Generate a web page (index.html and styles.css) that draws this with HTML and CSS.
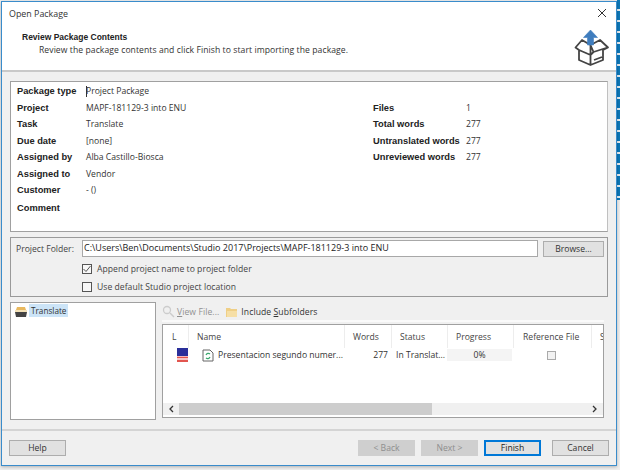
FILE: index.html
```html
<!DOCTYPE html>
<html lang="en">
<head>
<meta charset="utf-8">
<title>Open Package</title>
<link rel="stylesheet" href="styles.css">
</head>
<body>
<div class="desktop">
  <div class="window">
    <header class="head">
      <div class="title-row">
        <span class="title">Open Package</span>
        <svg class="close" width="10" height="10" viewBox="0 0 10 10"><path d="M1 1l8 8M9 1l-8 8" stroke="#333" stroke-width="1" fill="none"/></svg>
      </div>
      <div class="head-main">
        <div class="head-text">
          <h1 class="head-title">Review Package Contents</h1>
          <p class="head-sub">Review the package contents and click Finish to start importing the package.</p>
        </div>
        <svg class="box-icon" width="36" height="38" viewBox="0 0 36 38">
          <path d="M8 11L1.500 18.500 5 21v10l11.500 5 12.500-5V21l5-2.500L26 11l-9.500 5zM16.500 16v20M5 21l11.500 5 3-3M16.500 16l3 7 14-4.500M20 31l8-3" fill="none" stroke="#444" stroke-width="1.800" stroke-linejoin="round"/>
          <path d="M16.500 1L23.500 8.500h-4v7.500h-6V8.500h-4z" fill="#3f7dbe" stroke="#3f7dbe" stroke-width=".6" stroke-linejoin="round"/>
        </svg>
      </div>
    </header>
    <main class="content">
      <section class="info">
        <div class="info-col info-left">
          <div class="row"><b>Package type</b><span><i class="caret"></i>Project Package</span></div>
          <div class="row"><b>Project</b><span>MAPF-181129-3 into ENU</span></div>
          <div class="row"><b>Task</b><span>Translate</span></div>
          <div class="row"><b>Due date</b><span>[none]</span></div>
          <div class="row"><b>Assigned by</b><span>Alba Castillo-Biosca</span></div>
          <div class="row"><b>Assigned to</b><span>Vendor</span></div>
          <div class="row"><b>Customer</b><span>- ()</span></div>
          <div class="row row-comment"><b>Comment</b><span></span></div>
        </div>
        <div class="info-col info-right">
          <div class="row"><b>Files</b><span>1</span></div>
          <div class="row"><b>Total words</b><span>277</span></div>
          <div class="row"><b>Untranslated words</b><span>277</span></div>
          <div class="row"><b>Unreviewed words</b><span>277</span></div>
        </div>
      </section>
      <section class="folder">
        <div class="folder-line">
          <span class="folder-label">Project Folder:</span>
          <div class="input">C:\Users\Ben\Documents\Studio 2017\Projects\MAPF-181129-3 into ENU</div>
          <div class="btn browse">Browse...</div>
        </div>
        <label class="check"><span class="box"><svg width="10" height="10" viewBox="0 0 10 10"><path d="M1.500 5l2.500 2.500L8.500 2" fill="none" stroke="#555" stroke-width="1"/></svg></span>Append project name to project folder</label>
        <label class="check"><span class="box"></span>Use default Studio project location</label>
      </section>
      <section class="split">
        <div class="tree">
          <svg width="12" height="10" viewBox="0 0 12 10"><path d="M2 0h8l1 3H1z" fill="#e9b95f"/><rect x="0" y="3" width="12" height="2" fill="#f4e2b8"/><path d="M0 5h12l-1 5H1z" fill="#444"/></svg>
          <span class="tree-label">Translate</span>
        </div>
        <div class="files">
          <div class="toolbar">
            <span class="tool disabled"><svg width="13" height="13" viewBox="0 0 13 13"><circle cx="5" cy="5" r="3.500" fill="none" stroke="#ccc" stroke-width="1.300"/><path d="M8 8l4 4" stroke="#ccc" stroke-width="1.500"/></svg><span><u>V</u>iew File...</span></span>
            <span class="tool tool-folder"><svg width="12" height="12" viewBox="0 0 12 12"><path d="M0 2h4l1 1h6v8H0z" fill="#efcf86"/><path d="M1 5h10v6H1z" fill="#f6dfa6"/></svg><span>Include <u>S</u>ubfolders</span></span>
          </div>
          <div class="list">
            <div class="list-head">
              <span class="c c-l">L</span>
              <span class="c c-name">Name</span>
              <span class="c c-words">Words</span>
              <span class="c c-status">Status</span>
              <span class="c c-progress">Progress</span>
              <span class="c c-ref">Reference File</span>
              <span class="c c-s">S</span>
            </div>
            <div class="list-row">
              <span class="flag"></span>
              <svg class="doc" width="12" height="13" viewBox="0 0 12 13"><path d="M1 1h7l3 3v8H1z" fill="#fff" stroke="#666"/><path d="M4 6a2.500 2.500 0 0 1 4-1" fill="none" stroke="#3aa76d" stroke-width="1.200"/><path d="M8 8a2.500 2.500 0 0 1-4 1" fill="none" stroke="#3aa76d" stroke-width="1.200"/></svg>
              <span class="r-name">Presentacion segundo numer...</span>
              <span class="r-words">277</span>
              <span class="r-status">In Translat...</span>
              <span class="r-progress">0%</span>
              <span class="r-ref"><span class="mini"></span></span>
            </div>
            <div class="spacer"></div>
            <div class="scroll">
              <svg class="arrow" width="6" height="8" viewBox="0 0 6 8"><path d="M5 1L2 4l3 3" fill="none" stroke="#333" stroke-width="1.300"/></svg>
              <div class="thumb"></div>
              <svg class="arrow" width="6" height="8" viewBox="0 0 6 8"><path d="M1 1l3 3-3 3" fill="none" stroke="#333" stroke-width="1.300"/></svg>
            </div>
          </div>
        </div>
      </section>
    </main>
    <footer class="foot">
      <div class="btn">Help</div>
      <div class="foot-right">
        <div class="btn off">&lt; Back</div>
        <div class="btn off">Next &gt;</div>
        <div class="btn primary">Finish</div>
        <div class="btn cancel">Cancel</div>
      </div>
    </footer>
  </div>
</div>
</body>
</html>
```

FILE: styles.css
```css
* { box-sizing: border-box; }
html, body { margin: 0; height: 100%; }
body { width: 620px; height: 470px; overflow: hidden; font-family: "Open Sans", "Noto Sans", sans-serif; font-size: 8.600px; color: #333; }
.desktop {
  width: 620px; height: 470px; padding: 1px 3px 4px 1px;
  background:
    repeating-linear-gradient(to bottom, #0d78b8 0 9px, #e8eef2 9px 11px) right top / 3px 200px no-repeat,
    #eeeeee;
}
.window { width: 616px; height: 465px; border: 1px solid #3a8ccb; background: #f0f0f0; display: flex; flex-direction: column; box-shadow: 0 1px 3px rgba(0,0,0,.25); }
.head { height: 70px; background: #fff; border-bottom: 2px solid #c9c9c9; padding: 0 4px 0 7px; flex: none; }
.title-row { display: flex; justify-content: space-between; align-items: center; height: 20px; padding-top: 2px; }
.title { font-size: 8.900px; color: #333; }
.close { margin-right: 5px; }
.head-main { display: flex; justify-content: space-between; }
.head-text { padding: 10px 0 0 13px; }
.head-title { margin: 0; font: bold 8.500px "Liberation Sans", sans-serif; color: #222; }
.head-sub { margin: 2px 0 0 17px; font-size: 8.600px; letter-spacing: .07px; }
.box-icon { margin-top: 7px; margin-right: 2px; }
.content { flex: 1; padding: 9px 8px 0 8px; display: flex; flex-direction: column; min-height: 0; }
.info { height: 151px; background: #fff; border: 1px solid #a0a0a0; border-right-color: #c0c0c0; padding: 1px 6px; display: flex; flex: none; }
.info-col { display: flex; flex-direction: column; }
.info-left { width: 356px; }
.row { display: flex; height: 16.500px; align-items: center; }
.row b { font: bold 9.300px "Liberation Sans", sans-serif; color: #222; flex: none; white-space: nowrap; }
.info-left .row b { width: 69px; }
.info-right { padding-top: 16.500px; }
.info-right .row b { width: 93px; }
.row-comment { margin-top: 1px; }
.caret { display: inline-block; width: 1px; height: 11px; background: #333; margin-right: -1px; vertical-align: middle; }
.folder { height: 60px; margin-top: 5px; background: #f0f0f0; border: 1px solid #9a9a9a; padding: 2px 2px 0 5px; flex: none; }
.folder-line { display: flex; align-items: center; height: 17px; }
.folder-label { width: 66px; color: #444; }
.input { width: 456px; height: 17px; background: #fff; border: 1px solid #a8a8a8; line-height: 13px; padding-left: 1px; color: #222; font-size: 9px; }
.btn { width: 57px; height: 16px; background: #e1e1e1; border: 1px solid #adadad; text-align: center; line-height: 14px; color: #333; }
.browse { width: 61px; margin-left: 5px; }
.check { display: flex; align-items: center; height: 18px; padding-left: 66px; color: #444; letter-spacing: .03px; }
.folder-line + .check { margin-top: 3px; }
.box { width: 10px; height: 10px; border: 1px solid #555; background: #f7f7f7; margin-right: 5px; display: flex; align-items: center; justify-content: center; }
.box svg { flex: none; }
.split { display: flex; margin-top: 5px; flex: none; }
.tree { width: 146px; height: 118px; background: #fff; border: 1px solid #a0a0a0; padding: 1px 0 0 4px; display: flex; align-items: flex-start; flex: none; }
.tree svg { margin-top: 3px; flex: none; }
.tree-label { background: #cce4f7; padding: 0 2px; margin-left: 2px; height: 13px; line-height: 13px; color: #333; font-size: 8.200px; }
.files { margin-left: 6px; width: 442px; }
.toolbar { height: 20px; padding: 1px 0 0 0; display: flex; gap: 7px; align-items: center; border-bottom: 2px solid #fafafa; letter-spacing: .08px; }
.tool { display: flex; align-items: center; gap: 2px; }
.tool-folder { gap: 3px; }
.disabled { color: #909090; }
.list { height: 94px; margin-top: 2px; background: #fff; border: 1px solid #a0a0a0; display: flex; flex-direction: column; width: 442px; overflow: hidden; }
.list-head { display: flex; height: 23px; flex: none; }
.c { display: flex; align-items: center; border-right: 1px solid #ededed; padding-left: 8px; height: 100%; color: #444; flex: none; }
.c-l { width: 26px; padding-left: 9px; }
.c-name { width: 156px; }
.c-words { width: 47px; }
.c-status { width: 56px; }
.c-progress { width: 66px; }
.c-ref { width: 78px; white-space: nowrap; padding-left: 9px; }
.c-s { width: 13px; border: 0; padding-left: 8px; overflow: hidden; }
.list-row { display: flex; align-items: center; height: 14px; flex: none; }
.flag { width: 11px; height: 14px; margin-left: 14px; flex: none; background: linear-gradient(to bottom, #2a2f9a 0 8px, #f6b9b9 8px 9px, #e2554f 9px 10.500px, #f6c7c7 10.500px 12px, #e2554f 12px 14px); }
.doc { margin-left: 14px; flex: none; }
.r-name { margin-left: 4px; width: 126px; white-space: nowrap; color: #333; flex: none; }
.r-words { width: 44px; text-align: right; flex: none; }
.r-status { width: 59px; padding-left: 8px; white-space: nowrap; flex: none; }
.r-progress { width: 65px; background: #f4f4f4; text-align: center; height: 12px; line-height: 12px; flex: none; }
.r-ref { width: 78px; display: flex; justify-content: center; flex: none; }
.mini { width: 9px; height: 9px; border: 1px solid #aaa; background: #f2f2f2; display: block; }
.spacer { flex: 1; }
.scroll { height: 14px; background: #f0f0f0; display: flex; align-items: flex-start; flex: none; border-bottom: 2px solid #fff; }
.arrow { flex: none; margin: 2px 5px 0; }
.thumb { width: 253px; height: 12px; background: #cdcdcd; margin-right: auto; }
.foot { flex: none; height: 36px; border-top: 2px solid #d4d4d4; padding: 9px 7px 0 7px; display: flex; justify-content: space-between; background: #f0f0f0; }
.foot .btn { width: 57px; }
.foot-right { display: flex; gap: 6px; }
.off { color: #8e8e8e; background: #cfcfcf; border-color: #cfcfcf; }
.primary { border: 1px solid #0078d7; box-shadow: inset 0 0 0 1px #0078d7; color: #222; }
.foot .cancel { margin-left: 5px; }
```
